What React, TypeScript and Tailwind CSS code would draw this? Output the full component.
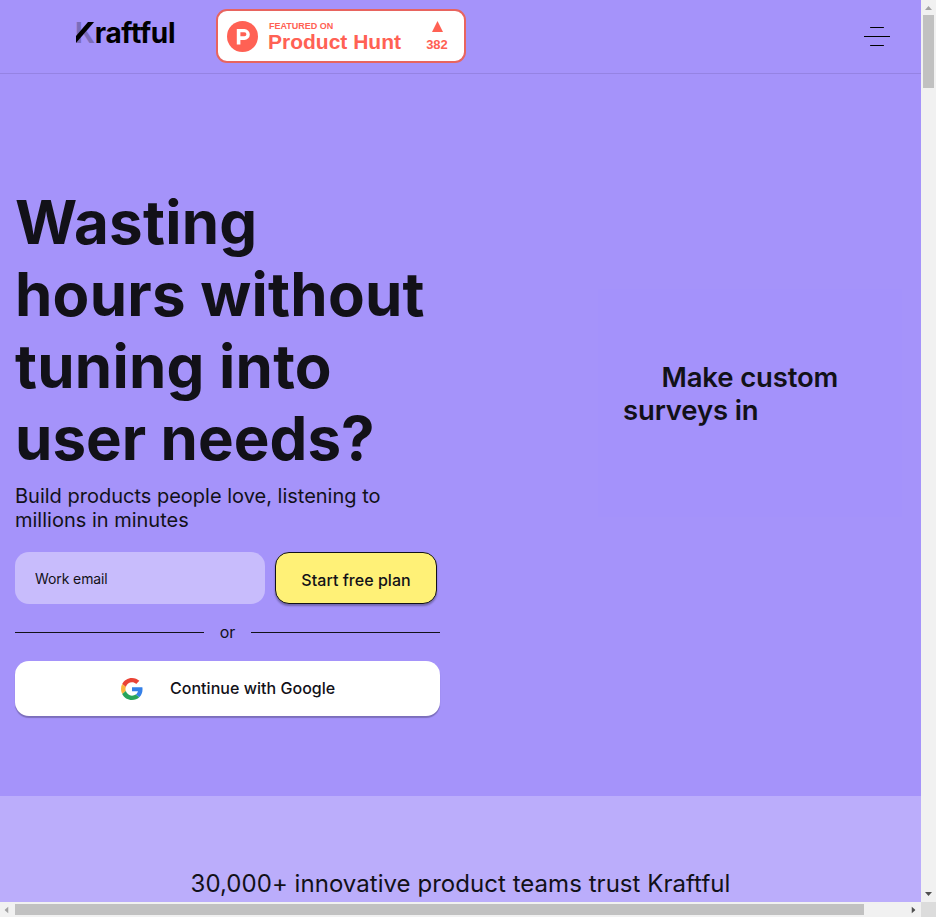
function Logo() {
  return (
    <div className="relative ml-[75px] flex h-[34px] w-[101px] items-center text-[28px] leading-[34px] font-bold tracking-[-0.35px] whitespace-nowrap text-black">
      <span className="opacity-25">K</span>
      <span>raftful</span>
      <svg className="absolute top-[6px] left-px" width="19" height="22" viewBox="0 0 19 22">
        <path d="M12 0h6L0 21v-7z" fill="#000" />
      </svg>
    </div>
  );
}

function ProductHuntBadge() {
  return (
    <div className="ml-10 flex h-[54px] w-[250px] rounded-[11px] border-2 border-[#e8645f] bg-white pl-[9px] font-['Liberation_Sans',Arial,sans-serif] font-bold text-[#ff6154]">
      <svg className="mt-[10px]" width="31" height="31" viewBox="0 0 31 31">
        <circle cx="15.5" cy="15.5" r="15.5" fill="#ff6154" />
        <path
          d="M17.4 15.3h-4v-4h4a2 2 0 0 1 0 4m0-7.2H9.8v15.4h3.6v-4.6h4a5.4 5.4 0 0 0 0-10.8"
          fill="#fff"
        />
      </svg>
      <div className="ml-[10px] w-[150px] pt-[9px]">
        <div className="pl-px text-[9px] leading-[12px]">FEATURED ON</div>
        <div className="text-[21px] leading-[20px] whitespace-nowrap">Product Hunt</div>
      </div>
      <div className="ml-[2px] flex w-[34px] flex-col items-center pt-[10px]">
        <svg width="11" height="11" viewBox="0 0 11 11">
          <path d="M5.5 0 11 11H0z" fill="#ff6154" />
        </svg>
        <div className="mt-[6px] text-[13px] leading-[14px]">382</div>
      </div>
    </div>
  );
}

function MenuIcon() {
  return (
    <div className="mr-[31px] ml-auto flex h-[19px] w-[26px] flex-col items-center justify-between">
      <i className="h-px w-[14px] rounded-full bg-black" />
      <i className="h-px w-[26px] bg-black" />
      <i className="h-px w-[14px] rounded-full bg-black" />
    </div>
  );
}

function GoogleIcon() {
  return (
    <svg width="22" height="22" viewBox="0 0 48 48">
      <path fill="#EA4335" d="M24 9.5c3.54 0 6.71 1.22 9.21 3.6l6.85-6.85C35.9 2.38 30.47 0 24 0 14.62 0 6.51 5.38 2.56 13.22l7.98 6.19C12.43 13.72 17.74 9.5 24 9.5z" />
      <path fill="#3580E8" d="M46.98 24.55c0-1.57-.15-3.09-.38-4.55H24v9.02h12.94c-.58 2.96-2.26 5.48-4.78 7.18l7.73 6c4.51-4.18 7.09-10.36 7.09-17.65z" />
      <path fill="#FBB53C" d="M10.53 28.59c-.48-1.45-.76-2.99-.76-4.59s.27-3.14.76-4.59l-7.98-6.19C.92 16.46 0 20.12 0 24c0 3.88.92 7.54 2.56 10.78l7.97-6.19z" />
      <path fill="#28A45A" d="M24 48c6.48 0 11.93-2.13 15.89-5.81l-7.73-6c-2.15 1.45-4.92 2.3-8.16 2.3-6.26 0-11.57-4.22-13.47-9.91l-7.98 6.19C6.51 42.62 14.62 48 24 48z" />
    </svg>
  );
}

function Hero() {
  return (
    <main className="flex h-[722px] shrink-0">
      <section className="ml-[15px] w-[425px] pt-[112px]">
        <h1 className="text-[60px] leading-[72px] font-bold tracking-[0.24px] whitespace-nowrap">
          Wasting
          <br />
          hours without
          <br />
          tuning into
          <br />
          <span className="tracking-[0.05px]">user needs?</span>
        </h1>
        <p className="mt-[10px] text-[20px] leading-[24px] whitespace-nowrap">
          Build products people love, listening to
          <br />
          millions in minutes
        </p>
        <div className="mt-5 flex gap-[10px]">
          <input
            className="h-[52px] w-[250px] rounded-[14px] bg-[#c8bcfc] px-5 pt-px text-[14px] tracking-[-0.1px] outline-none placeholder:text-[#121118] placeholder:opacity-100"
            placeholder="Work email"
          />
          <button className="h-[52px] w-[162px] rounded-[14px] border border-[#121118] bg-[#fff177] pt-1 text-[16px] font-medium tracking-[0.04px] shadow-[0_2px_2px_rgba(0,0,0,0.3)]">
            Start free plan
          </button>
        </div>
        <div className="mt-4 flex h-6 items-center">
          <div className="h-px w-[189px] bg-[#121118]" />
          <span className="flex-1 text-center text-[16px] leading-6">or</span>
          <div className="h-px w-[189px] bg-[#121118]" />
        </div>
        <button className="mt-[17px] flex h-[55px] w-[425px] items-center rounded-[14px] bg-white pl-[106px] text-[16px] font-medium shadow-[0_2px_1px_rgba(0,0,0,0.25)]">
          <GoogleIcon />
          <span className="ml-[27px] pb-[2px] tracking-[0.03px] whitespace-nowrap">Continue with Google</span>
        </button>
      </section>
      <section className="mt-[215px] ml-[158px] h-[228px] w-[304px] bg-[#a492fb] pt-[72px] pl-[25px] text-[27.5px] leading-[33px] font-semibold tracking-[-0.15px] whitespace-nowrap">
        <div className="pl-[38.5px]">Make custom</div>
        <div>surveys in</div>
      </section>
    </main>
  );
}

function Arrow({ className }: { className: string }) {
  return (
    <svg className={className} width="7" height="4" viewBox="0 0 7 4">
      <path d="M3.5 0 7 4H0z" fill="currentColor" />
    </svg>
  );
}

export default function App() {
  return (
    <div className="grid h-[917px] w-[936px] grid-cols-[921px_15px] grid-rows-[902px_15px] overflow-hidden bg-[#f1f1f1] font-[Inter,sans-serif] text-[#121118]">
      <div className="flex flex-col overflow-hidden bg-[#a593fa]">
        <header className="flex h-[74px] shrink-0 items-center border-b border-[#9583e3]">
          <div className="pb-2">
            <Logo />
          </div>
          <div className="pb-[2px]">
            <ProductHuntBadge />
          </div>
          <MenuIcon />
        </header>
        <Hero />
        <section className="flex-1 bg-[#bbadfb] pt-[73px] text-center text-[24px] leading-[30px] tracking-[0.04px] whitespace-nowrap">
          30,000+ innovative product teams trust Kraftful
        </section>
      </div>
      <div className="flex flex-col items-center pt-[6px]">
        <Arrow className="text-[#a3a3a3]" />
        <div className="mt-[5px] h-[73px] w-[11px] bg-[#c1c1c1]" />
        <Arrow className="mt-auto mb-[6px] rotate-180 text-[#505050]" />
      </div>
      <div className="flex items-center">
        <Arrow className="ml-[3px] -rotate-90 text-[#a3a3a3]" />
        <div className="ml-[5px] h-[11px] w-[849px] bg-[#c1c1c1]" />
        <Arrow className="mr-[4px] ml-auto rotate-90 text-[#505050]" />
      </div>
      <div className="bg-[#dcdcdc]" />
    </div>
  );
}
